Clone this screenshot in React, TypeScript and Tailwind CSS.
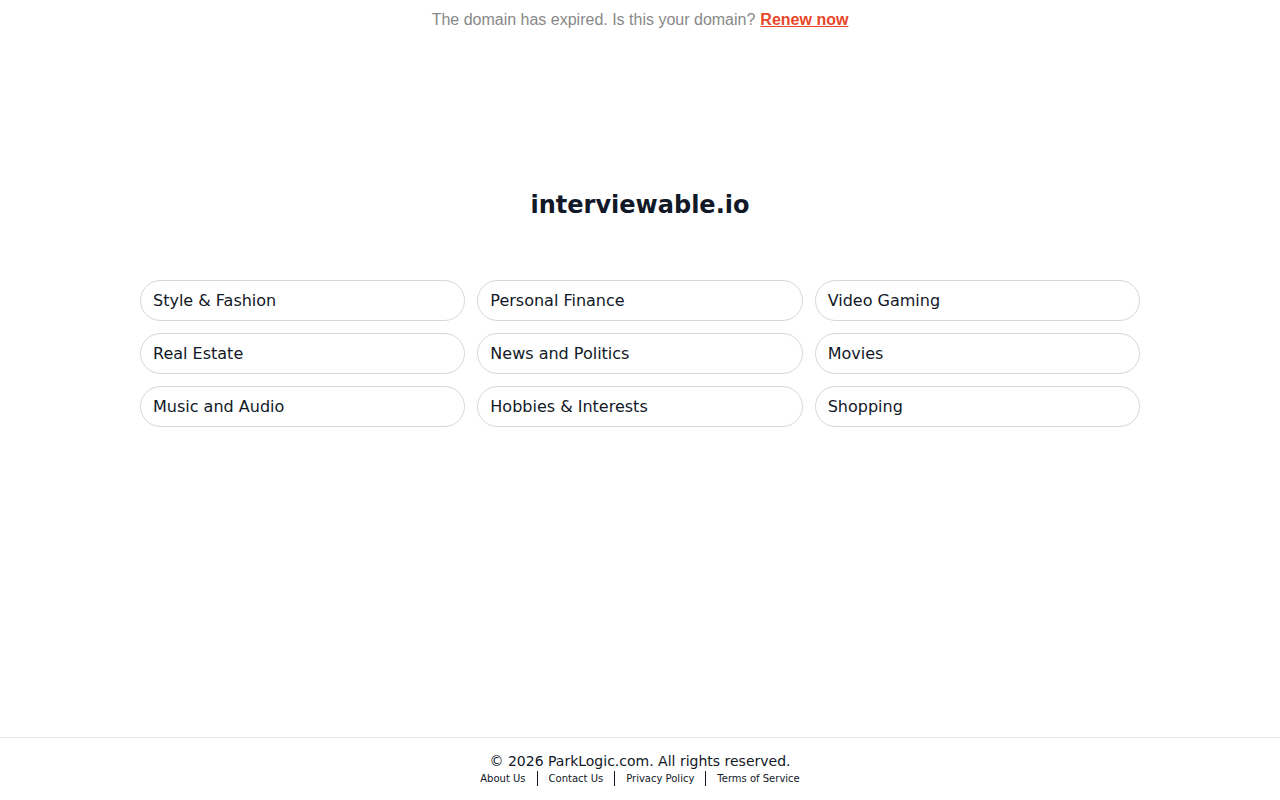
const categories = [
  "Style & Fashion",
  "Personal Finance",
  "Video Gaming",
  "Real Estate",
  "News and Politics",
  "Movies",
  "Music and Audio",
  "Hobbies & Interests",
  "Shopping",
];

const footerLinks = ["About Us", "Contact Us", "Privacy Policy", "Terms of Service"];

export default function App() {
  return (
    <div className="flex min-h-screen flex-col bg-white font-['DejaVu_Sans',sans-serif] text-gray-900">
      <div className="flex h-[40px] items-center justify-center font-['Liberation_Sans',Arial,sans-serif] text-base text-[#888888]">
        <span>The domain has expired. Is this your domain?</span>
        <a href="#" className="ml-[5px] font-bold text-[#e8462a] underline">
          Renew now
        </a>
      </div>

      <main className="flex-1">
        <h1 className="mt-[149px] text-center text-2xl font-bold leading-8 text-[#111827]">interviewable.io</h1>

        <div className="mx-auto mt-[59px] grid w-[1000px] grid-cols-3 gap-3">
          {categories.map((item) => (
            <a
              key={item}
              href="#"
              className="flex h-[41px] items-center rounded-full border border-[#d6d6de] px-3 text-base text-[#111827]"
            >
              {item}
            </a>
          ))}
        </div>
      </main>

      <footer className="flex h-[63px] flex-col items-center border-t border-[#e5e7eb] pt-[13px]">
        <p className="text-sm leading-5 text-[#111827]">© 2026 ParkLogic.com. All rights reserved.</p>
        <div className="flex items-center text-[10px] leading-[14px] text-[#111827]">
          {footerLinks.map((link, i) => (
            <div key={link} className="flex items-center">
              {i > 0 ? <span className="mx-[11px] h-[15px] w-px bg-[#111827]" /> : null}
              <a href="#">{link}</a>
            </div>
          ))}
        </div>
      </footer>
    </div>
  );
}
